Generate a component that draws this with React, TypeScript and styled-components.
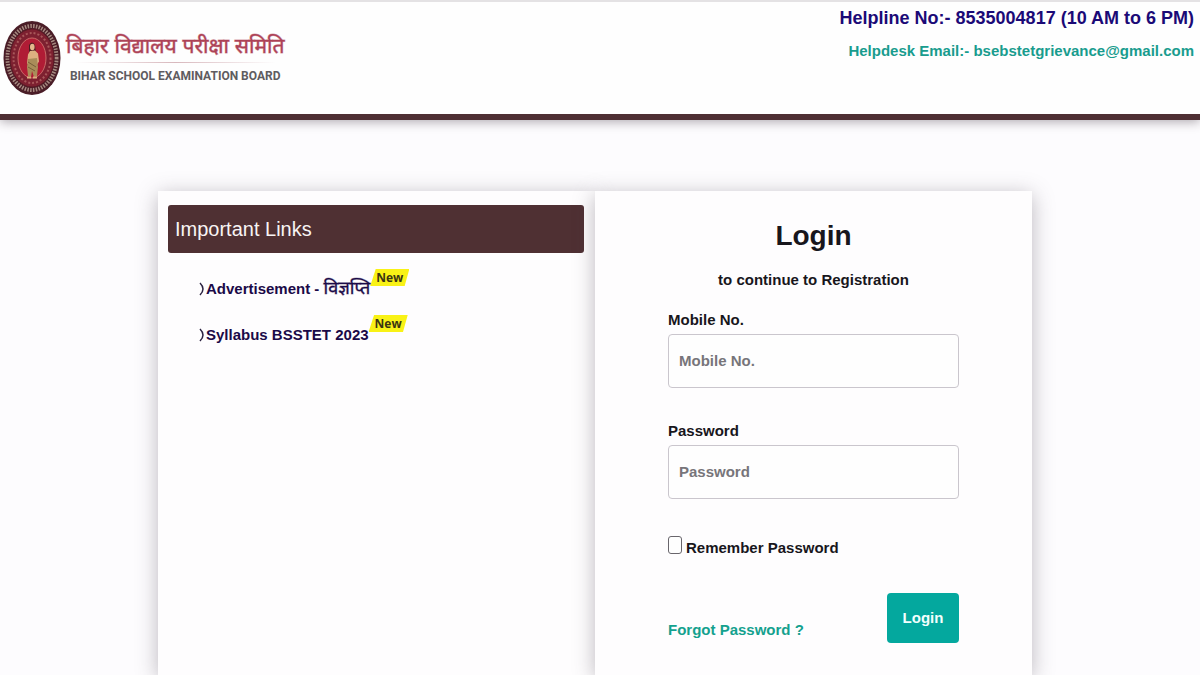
import React from "react";
import styled, { createGlobalStyle } from "styled-components";

const GlobalStyle = createGlobalStyle`
  *, *::before, *::after { box-sizing: border-box; }
  html { height: 100%; }
  body {
    height: 100%;
    margin: 0;
    background: #fdfcfe;
    color: #18161c;
    font: bold 15px/24px "Liberation Sans", "Noto Sans Devanagari", sans-serif;
  }
  #root { height: 100%; }
`;

const Page = styled.div`
  min-height: 100%;
  display: flex;
  flex-direction: column;
`;

const Header = styled.header`
  display: flex;
  justify-content: space-between;
  min-height: 120px;
  background: #fefefe;
  border-top: 2px solid #e4e2e4;
  border-bottom: 6px solid #4e2f33;
  box-shadow: 0 2px 10px rgba(60, 50, 60, 0.4);
`;

const Brand = styled.a`
  display: flex;
  align-items: flex-start;
  gap: 5px;
  padding: 18px 0 0 3px;
  text-decoration: none;
`;

const BrandNames = styled.div`
  display: flex;
  flex-direction: column;
  align-items: center;
  padding-top: 10px;
`;

const HindiName = styled.span`
  color: #ad4256;
  font-size: 21px;
  font-weight: normal;
  line-height: 32px;
  -webkit-text-stroke: 1px rgba(173, 66, 86, 0.5);
  white-space: nowrap;
`;

const Rule = styled.span`
  width: 92%;
  height: 1px;
  background: linear-gradient(90deg, transparent, #d8b8bd, transparent);
`;

const EnglishName = styled.span`
  color: #5f5c60;
  font-family: Roboto, "Liberation Sans", sans-serif;
  font-size: 12px;
  line-height: 26px;
  white-space: nowrap;
`;

const Contact = styled.address`
  display: flex;
  flex-direction: column;
  align-items: flex-end;
  padding: 2px 6px 0 0;
  font-style: normal;
  white-space: nowrap;
`;

const Helpline = styled.span`
  color: #1b0a77;
  font-size: 18px;
  line-height: 28px;
`;

const Email = styled.a`
  margin-top: 6px;
  color: #199c8e;
  line-height: 26px;
  text-decoration: none;
`;

const Main = styled.main`
  flex: 1;
  display: grid;
  grid-template-columns: 1fr 1fr;
  margin: 71px 14% 0 13%;
  padding-left: 2px;
`;

const Panel = styled.section`
  background: #fefdfe;
  box-shadow: 0 4px 20px rgba(70, 60, 75, 0.36);
`;

const LinksPanel = styled(Panel)`
  padding: 14px 11px 14px 10px;
`;

const LoginPanel = styled(Panel)`
  display: flex;
  flex-direction: column;
  padding: 25px 73px 24px;
`;

const LinksTitle = styled.h2`
  margin: 0;
  padding: 8px 7px;
  border-radius: 3px;
  background: #4f3033;
  color: #f8f4f4;
  font-size: 20px;
  font-weight: normal;
  line-height: 32px;
`;

const LinkList = styled.ul`
  display: flex;
  flex-direction: column;
  gap: 8px;
  margin: 12px 0 0;
  padding: 0 0 0 30px;
  list-style: none;
`;

const LinkItem = styled.li`
  display: flex;
  align-items: flex-end;
  height: 38px;
`;

const NoticeLink = styled.a`
  display: flex;
  align-items: center;
  gap: 2px;
  color: #1b0a48;
  line-height: 28px;
  text-decoration: none;
  white-space: nowrap;
`;

const HindiWord = styled.span`
  font-size: 18px;
  font-weight: normal;
  line-height: 24px;
  -webkit-text-stroke: 1px rgba(27, 10, 72, 0.4);
`;

const NewTag = styled.span`
  align-self: flex-start;
  margin-top: 4px;
  padding: 0 6px;
  background: #f9f216;
  clip-path: polygon(14% 0, 100% 0, 88% 100%, 0 100%);
  color: #3b3512;
  font-family: "Open Sans", "Noto Sans", sans-serif;
  font-size: 12px;
  line-height: 17px;
`;

const Title = styled.h1`
  margin: 0;
  font-size: 28px;
  line-height: 40px;
  text-align: center;
`;

const Subtitle = styled.p`
  margin: 12px 0 16px;
  text-align: center;
`;

const Field = styled.div`
  display: flex;
  flex-direction: column;
  margin-bottom: 31px;
`;

const Label = styled.label`
  line-height: 24px;
`;

const Input = styled.input`
  width: 100%;
  height: 54px;
  margin-top: 2px;
  padding: 0 11px 2px 10px;
  border: 1px solid #cac6cd;
  border-radius: 4px;
  background: #fefefe;
  color: #18161c;
  font: inherit;
  &::placeholder { color: #77757a; opacity: 1; }
`;

const Remember = styled.label`
  display: flex;
  align-items: center;
  gap: 4px;
  margin-top: 6px;
`;

const Checkbox = styled.input`
  appearance: none;
  width: 14px;
  height: 18px;
  margin: 0 0 6px;
  border: 1px solid #69666c;
  border-radius: 3px;
  background: #fefefe;
  &:checked { background: #04a89e; }
`;

const Actions = styled.div`
  display: flex;
  align-items: flex-end;
  justify-content: space-between;
  margin-top: 33px;
`;

const ForgotLink = styled.a`
  color: #14a18e;
  line-height: 26px;
  text-decoration: none;
`;

const LoginButton = styled.button`
  min-width: 72px;
  height: 50px;
  padding: 0 12px;
  border: 0;
  border-radius: 4px;
  background: #04a89e;
  color: #f2fffd;
  font: inherit;
`;

const Seal = () => (
  <svg width="58" height="76" viewBox="0 0 58 76" aria-hidden="true">
    <ellipse cx="29" cy="38" rx="28.5" ry="37" fill="#4a1d27" />
    <ellipse cx="29" cy="38" rx="24.5" ry="32" fill="none" stroke="#a68a80" strokeWidth="4" strokeDasharray="1.5 1.3" />
    <ellipse cx="29" cy="38" rx="22" ry="29" fill="#7d2030" stroke="#5b1a25" />
    <ellipse cx="29" cy="38" rx="18.5" ry="25" fill="none" stroke="#a8585a" strokeWidth="2" strokeDasharray="2 2" />
    <ellipse cx="29" cy="38" rx="14" ry="20" fill="#b01c35" stroke="#c96a68" />
    <path d="M26 25q3-5 6 0l1 9H26z" fill="#4b1c20" />
    <ellipse cx="29.3" cy="27" rx="2.3" ry="3.3" fill="#e5b88d" />
    <path d="M27 31l5-.5 3 3 1 8-2 3-2-5-5 1-1 4-2-1 1-9z" fill="#ddb080" />
    <path d="M25 39l9-1 1 9-1 9-3 1-2-6-1 6-3-1-1-9z" fill="#a98d59" />
    <path d="M25 42l8 5M25 47l7 4" stroke="#776038" fill="none" />
    <path d="M24 57.5h4M30 57.5h4" stroke="#ddb080" strokeWidth="2" />
  </svg>
);

const Chevron = () => (
  <svg width="6" height="16" viewBox="0 0 6 16" aria-hidden="true">
    <path d="M2 2q3 3 3 6t-3 6" fill="none" stroke="#2a2140" strokeWidth="1.5" />
  </svg>
);

const notices = [
  { text: "Advertisement - ", hindi: "विज्ञप्ति", href: "#advertisement" },
  { text: "Syllabus BSSTET 2023", hindi: "", href: "#syllabus" },
];

export default function App() {
  return (
    <>
      <GlobalStyle />
      <Page>
        <Header>
          <Brand href="#home">
            <Seal />
            <BrandNames>
              <HindiName lang="hi">बिहार विद्यालय परीक्षा समिति</HindiName>
              <Rule />
              <EnglishName>BIHAR SCHOOL EXAMINATION BOARD</EnglishName>
            </BrandNames>
          </Brand>
          <Contact>
            <Helpline>Helpline No:- 8535004817 (10 AM to 6 PM)</Helpline>
            <Email href="mailto:bsebstetgrievance@gmail.com">Helpdesk Email:- bsebstetgrievance@gmail.com</Email>
          </Contact>
        </Header>
        <Main>
          <LinksPanel>
            <LinksTitle>Important Links</LinksTitle>
            <LinkList>
              {notices.map((notice) => (
                <LinkItem key={notice.href}>
                  <NoticeLink href={notice.href}>
                    <Chevron />
                    <span>
                      {notice.text}
                      {notice.hindi && <HindiWord lang="hi">{notice.hindi}</HindiWord>}
                    </span>
                  </NoticeLink>
                  <NewTag>New</NewTag>
                </LinkItem>
              ))}
            </LinkList>
          </LinksPanel>
          <LoginPanel as="form">
            <Title>Login</Title>
            <Subtitle>to continue to Registration</Subtitle>
            <Field>
              <Label htmlFor="mobile">Mobile No.</Label>
              <Input id="mobile" type="tel" placeholder="Mobile No." />
            </Field>
            <Field>
              <Label htmlFor="password">Password</Label>
              <Input id="password" type="password" placeholder="Password" />
            </Field>
            <Remember htmlFor="remember">
              <Checkbox id="remember" type="checkbox" />
              Remember Password
            </Remember>
            <Actions>
              <ForgotLink href="#forgot">Forgot Password ?</ForgotLink>
              <LoginButton type="button">Login</LoginButton>
            </Actions>
          </LoginPanel>
        </Main>
      </Page>
    </>
  );
}
